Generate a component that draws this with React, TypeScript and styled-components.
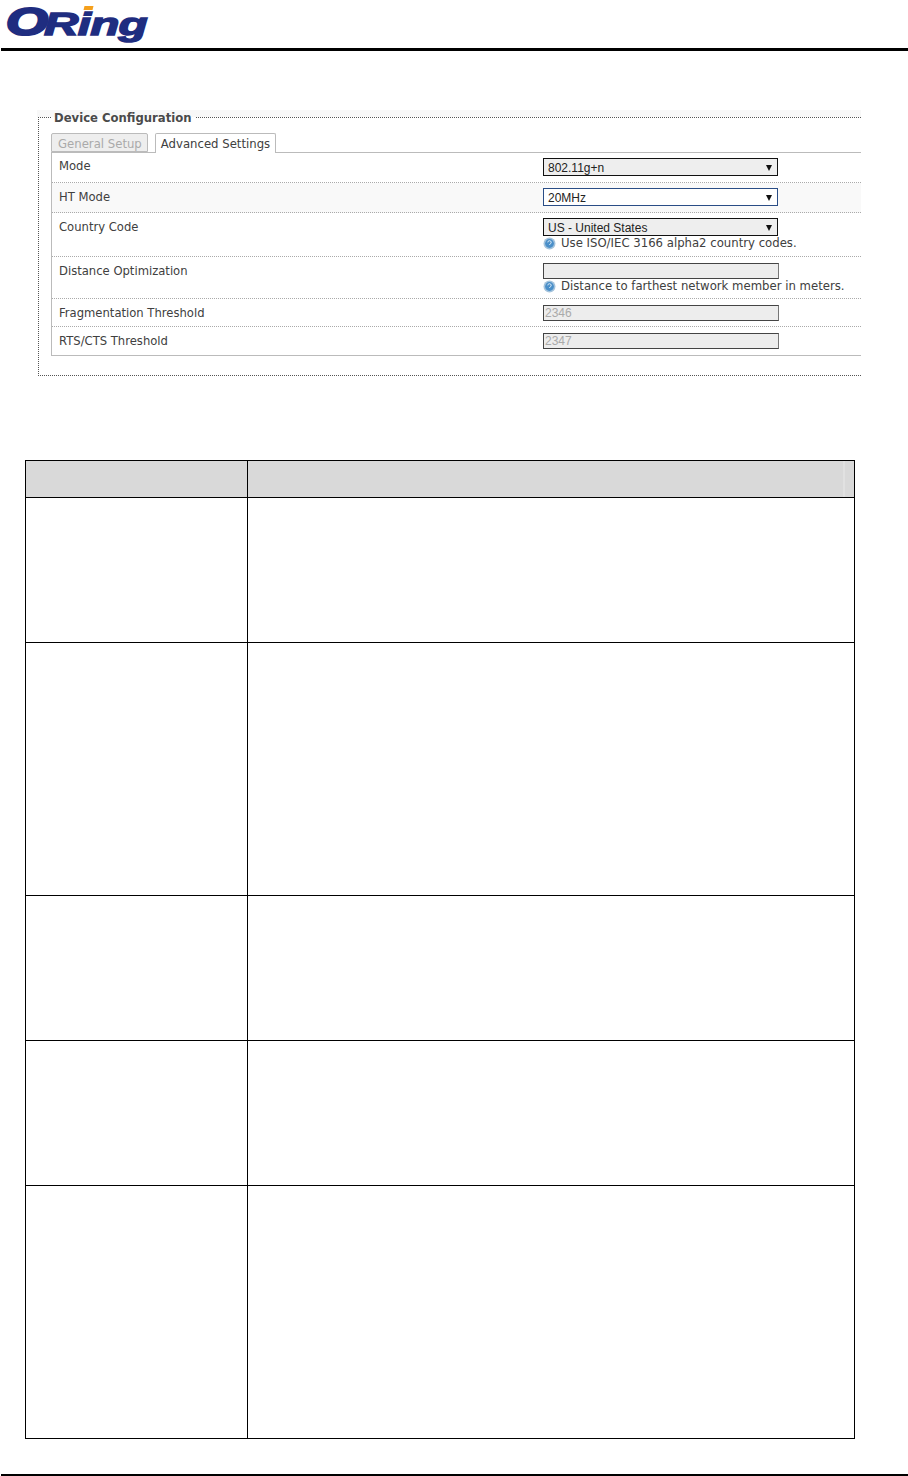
import React from 'react'
import styled, { createGlobalStyle } from 'styled-components'

const GlobalStyle = createGlobalStyle`
  html, body {
    margin: 0;
    padding: 0;
    background: #fff;
  }
`

const Page = styled.div`
  width: 908px;
  height: 1476px;
  display: flex;
  flex-direction: column;
  overflow: hidden;
  font-family: 'DejaVu Sans', Verdana, sans-serif;
`

const Header = styled.header`
  height: 48px;
  flex: none;
  margin-left: 1px;
  border-bottom: 3px solid #000;
  box-sizing: content-box;
`

const Logo = styled.div`
  position: relative;
  display: flex;
  align-items: flex-start;
  height: 48px;
  padding-top: 4px;
  box-sizing: border-box;
  font-family: 'Liberation Sans', Arial, sans-serif;
  font-weight: bold;
  font-style: italic;
  color: #1f2d80;
`

const LogoBig = styled.span`
  display: inline-block;
  flex: none;
  margin-left: 5px;
  width: 44px;
  height: 36px;
  font-size: 38px;
  line-height: 36px;
  -webkit-text-stroke: 2.2px #1f2d80;
  transform: scaleX(1.42);
  transform-origin: left center;
`

const LogoRest = styled.span`
  display: inline-block;
  flex: none;
  height: 40px;
  margin-left: -6px;
  font-size: 32px;
  line-height: 40px;
  letter-spacing: -0.5px;
  -webkit-text-stroke: 1.4px #1f2d80;
  transform: scaleX(1.49);
  transform-origin: left center;
`

const LogoDot = styled.span`
  position: absolute;
  left: 83px;
  top: 6px;
  width: 9px;
  height: 4px;
  background: #f5a01c;
  transform: skewX(-14deg);
`

const Fieldset = styled.section`
  position: relative;
  flex: none;
  margin: 66px 47px 0 38px;
  height: 259px;
  box-sizing: border-box;
  border: 1px dotted #555;
  border-right: 0;
  padding: 15px 0 0 12px;
`

const TopShade = styled.div`
  position: absolute;
  top: -8px;
  left: -2px;
  right: 0;
  height: 7px;
  background: #f8f8f8;
`

const Legend = styled.div`
  position: absolute;
  top: -8px;
  left: 12px;
  padding: 0 3px;
  font-size: 11.65px;
  line-height: 16px;
  font-weight: bold;
  color: #4a4a4a;
  background: linear-gradient(#f8f8f8 7px, #fff 7px);
`

const Tabs = styled.div`
  display: flex;
  gap: 7px;
  height: 19px;
  align-items: flex-end;
  position: relative;
  z-index: 1;
`

const Tab = styled.div<{ $active?: boolean }>`
  box-sizing: border-box;
  height: ${p => (p.$active ? '20px' : '19px')};
  padding: 0 5px 0 ${p => (p.$active ? '5px' : '6px')};
  margin-bottom: ${p => (p.$active ? '-1px' : '0')};
  border: 1px solid #bbb;
  border-bottom: ${p => (p.$active ? '0' : '1px solid #bbb')};
  border-radius: 2px 2px 0 0;
  background: ${p => (p.$active ? '#fff' : '#eee')};
  color: ${p => (p.$active ? '#404040' : '#aaa')};
  font-size: 11.7px;
  line-height: ${p => (p.$active ? '20px' : '21px')};
  white-space: nowrap;
`

const Panel = styled.div`
  border: 1px solid #bbb;
  border-right: 0;
`

const Row = styled.div<{ $h: number; $top?: number; $shade?: boolean; $last?: boolean }>`
  display: grid;
  grid-template-columns: 491px 1fr;
  box-sizing: border-box;
  height: ${p => p.$h}px;
  background: ${p => (p.$shade ? '#f9f9f9' : '#fff')};
  border-bottom: ${p => (p.$last ? '0' : '1px dotted #aaa')};
  padding-top: ${p => p.$top ?? 5}px;
`

const Label = styled.div<{ $nudge?: number }>`
  padding: ${p => p.$nudge ?? 0}px 0 0 7px;
  font-size: 11.6px;
  line-height: 16px;
  color: #404040;
`

const Control = styled.div`
  display: flex;
  flex-direction: column;
  font-size: 11.7px;
  line-height: 14px;
  color: #404040;
`

const Select = styled.div<{ $focus?: boolean }>`
  box-sizing: border-box;
  width: 235px;
  height: 18px;
  display: flex;
  align-items: center;
  justify-content: space-between;
  padding: 1px 5px 0 4px;
  border: 1px solid ${p => (p.$focus ? '#2a4d86' : '#111')};
  background: ${p => (p.$focus ? '#fff' : '#eee')};
  font-family: 'Liberation Sans', Arial, sans-serif;
  font-size: 12px;
  color: #222;
`

const Caret = styled.span`
  width: 0;
  height: 0;
  border-left: 3.5px solid transparent;
  border-right: 3.5px solid transparent;
  border-top: 6px solid #111;
`

const Input = styled.div`
  box-sizing: border-box;
  width: 236px;
  height: 16px;
  padding-left: 1px;
  border: 1px solid #444;
  border-right-color: #777;
  background: #ededed;
  font-family: 'Liberation Sans', Arial, sans-serif;
  font-size: 12px;
  line-height: 14px;
  color: #aaa;
`

const Hint = styled.div`
  display: flex;
  align-items: center;
  gap: 5px;
  height: 14px;
  white-space: nowrap;
`

const HelpIcon = styled.svg`
  width: 13px;
  height: 13px;
  flex: none;
`

const Table = styled.table`
  flex: none;
  margin: 84px 0 0 25px;
  width: 830px;
  border-collapse: collapse;
  table-layout: fixed;

  td, th {
    border: 1px solid #000;
    padding: 0;
  }
`

const HeadCell = styled.th`
  height: 36px;
  background: #d9d9d9;
`

const LastHeadCell = styled(HeadCell)`
  background: linear-gradient(to right, #d9d9d9 calc(100% - 11px), #e8e8e8 calc(100% - 11px), #e8e8e8 calc(100% - 10px), #d9d9d9 calc(100% - 10px));
`

const BodyCell = styled.td<{ $h: number }>`
  height: ${p => p.$h}px;
`

const Footer = styled.footer`
  flex: none;
  margin: auto 0 0 1px;
  height: 2px;
  background: #000;
`

const Help: React.FC = () => (
  <HelpIcon viewBox="0 0 13 13">
    <circle cx="6.5" cy="6.5" r="6" fill="#a4c3dc" />
    <circle cx="6.5" cy="6.5" r="4.4" fill="#4a8fc9" />
    <path d="M4.8 5.4a1.7 1.7 0 1 1 2.3 1.6c-.4.2-.6.5-.6 1" fill="none" stroke="#dbeaf6" strokeWidth="1" />
  </HelpIcon>
)

const heights = [144, 252, 144, 144, 252]

export default function App() {
  return (
    <Page>
      <GlobalStyle />
      <Header>
        <Logo>
          <LogoBig>O</LogoBig>
          <LogoRest>Ring</LogoRest>
          <LogoDot />
        </Logo>
      </Header>
      <Fieldset>
        <TopShade />
        <Legend>Device Configuration</Legend>
        <Tabs>
          <Tab>General Setup</Tab>
          <Tab $active>Advanced Settings</Tab>
        </Tabs>
        <Panel>
          <Row $h={30}>
            <Label>Mode</Label>
            <Control><Select>802.11g+n<Caret /></Select></Control>
          </Row>
          <Row $h={30} $shade>
            <Label $nudge={1}>HT Mode</Label>
            <Control><Select $focus>20MHz<Caret /></Select></Control>
          </Row>
          <Row $h={44}>
            <Label $nudge={1}>Country Code</Label>
            <Control>
              <Select>US - United States<Caret /></Select>
              <Hint><Help />Use ISO/IEC 3166 alpha2 country codes.</Hint>
            </Control>
          </Row>
          <Row $h={42} $top={6}>
            <Label>Distance Optimization</Label>
            <Control>
              <Input />
              <Hint><Help />Distance to farthest network member in meters.</Hint>
            </Control>
          </Row>
          <Row $h={28} $top={6}>
            <Label>Fragmentation Threshold</Label>
            <Control><Input>2346</Input></Control>
          </Row>
          <Row $h={28} $top={6} $last>
            <Label>RTS/CTS Threshold</Label>
            <Control><Input>2347</Input></Control>
          </Row>
        </Panel>
      </Fieldset>
      <Table>
        <colgroup>
          <col style={{ width: 222 }} />
          <col />
        </colgroup>
        <thead>
          <tr>
            <HeadCell />
            <LastHeadCell />
          </tr>
        </thead>
        <tbody>
          {heights.map((h, i) => (
            <tr key={i}>
              <BodyCell $h={h} />
              <BodyCell $h={h} />
            </tr>
          ))}
        </tbody>
      </Table>
      <Footer />
    </Page>
  )
}
